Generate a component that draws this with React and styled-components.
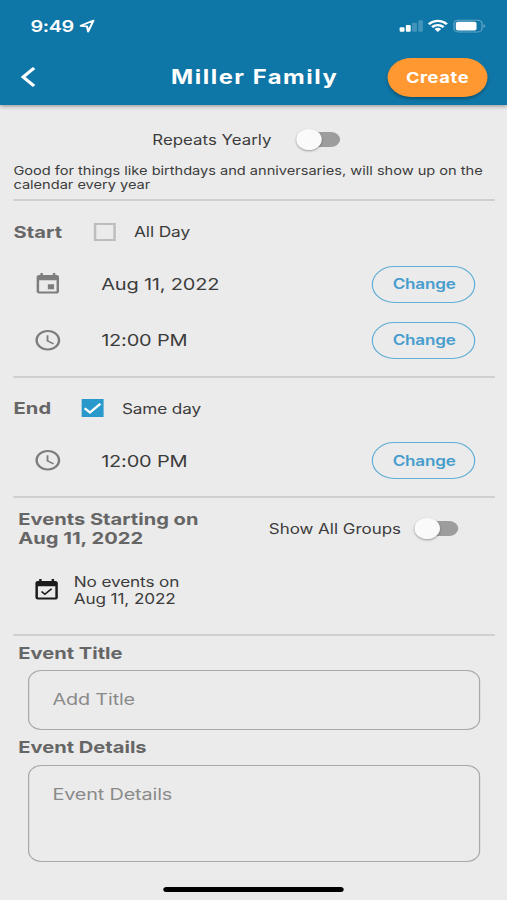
import { useState } from "react";
import styled, { createGlobalStyle } from "styled-components";
import { MdEvent, MdSchedule, MdEventAvailable } from "react-icons/md";

const HEADER_BLUE = "#0f77a7";
const LINK_BLUE = "#469dcd";
const ORANGE = "#ff9831";
const BACKGROUND = "#ebebeb";
const TEXT = "#3c3c3c";
const TITLE_GREY = "#666666";
const ICON_GREY = "#7d7d7d";

export default function App() {
    const [form, setForm] = useState({
        repeats: false,
        allDay: false,
        sameDay: true,
        allGroups: false,
    });

    const toggle = (field) => {
        setForm({ ...form, [field]: !form[field] });
    };

    return (
        <>
            <GlobalStyle />
            <Screen>
                <Header />
                <Content>
                    <RepeatRow>
                        <Label $size={13.8} $spacing={0.02}>Repeats Yearly</Label>
                        <Switch on={form.repeats} onClick={() => toggle("repeats")} />
                    </RepeatRow>
                    <Hint>
                        Good for things like birthdays and anniversaries, will show up on the calendar every year
                    </Hint>
                    <Divider />

                    <OptionRow $height={55} $top={6}>
                        <SectionTitle $width={66}>Start</SectionTitle>
                        <CheckBox checked={form.allDay} onClick={() => toggle("allDay")} />
                        <Label $size={14.2} $spacing={-0.1}>All Day</Label>
                    </OptionRow>
                    <ValueRow icon={<MdEvent />} value="Aug 11, 2022" />
                    <ValueRow icon={<MdSchedule />} value="12:00 PM" />
                    <Divider $top={8} />

                    <OptionRow $height={60}>
                        <SectionTitle $width={56}>End</SectionTitle>
                        <CheckBox checked={form.sameDay} onClick={() => toggle("sameDay")} />
                        <Label $size={14.1} $spacing={-0.1}>Same day</Label>
                    </OptionRow>
                    <ValueRow icon={<MdSchedule />} value="12:00 PM" height={45} />
                    <Divider $top={13} />

                    <EventsHeader>
                        <EventsTitle>Events Starting on<br />Aug 11, 2022</EventsTitle>
                        <GroupsToggle>
                            <Label $size={13.9} $spacing={0}>Show All Groups</Label>
                            <Switch on={form.allGroups} onClick={() => toggle("allGroups")} />
                        </GroupsToggle>
                    </EventsHeader>
                    <NoEvents>
                        <MdEventAvailable />
                        <p>No events on<br />Aug 11, 2022</p>
                    </NoEvents>
                    <Divider />

                    <FieldTitle>Event Title</FieldTitle>
                    <TitleInput placeholder="Add Title" />
                    <FieldTitle>Event Details</FieldTitle>
                    <DetailsInput placeholder="Event Details" />
                </Content>
                <HomeBar />
            </Screen>
        </>
    );
}

const Header = () => {
    return (
        <HeaderContainer>
            <StatusBar>
                <Clock>
                    9:49
                    <svg width="13" height="14" viewBox="0 0 13 14" fill="none" stroke="#ffffff" strokeWidth="1.7" strokeLinejoin="round">
                        <path d="M11.7 1.5 1.2 6.8 6.4 7.4 7.3 12.6Z" />
                    </svg>
                </Clock>
                <StatusIcons />
            </StatusBar>
            <NavBar>
                <BackButton>
                    <svg width="13" height="22" viewBox="0 0 13 22" fill="none" stroke="#ffffff" strokeWidth="2.9">
                        <path d="M11 2 2 11 11 20" />
                    </svg>
                </BackButton>
                <PageTitle>Miller Family</PageTitle>
                <CreateButton>Create</CreateButton>
            </NavBar>
        </HeaderContainer>
    );
};

const StatusIcons = () => {
    return (
        <svg width="72" height="14" viewBox="0 0 72 14" fill="#ffffff">
            <rect x="0.9" y="8.2" width="4" height="4.6" rx="1" />
            <rect x="6" y="6" width="4" height="6.8" rx="1" />
            <rect x="11.1" y="3.8" width="4" height="9" rx="1" opacity="0.22" />
            <rect x="16.2" y="1.2" width="3.8" height="11.6" rx="1" opacity="0.22" />
            <g fill="none" stroke="#ffffff" strokeWidth="2.2">
                <path d="M24.8 5.2C29.2 0.8 35.3 0.8 39.7 5.2" />
                <path d="M27.5 8.1C30.3 5.4 34.2 5.4 37 8.1" />
            </g>
            <path d="M29.5 9.9C31.3 8.3 33.2 8.3 35 9.9L32.25 12.9Z" />
            <rect x="45.5" y="1.2" width="23" height="11.8" rx="3.4" fill="none" stroke="#ffffff" strokeOpacity="0.35" />
            <rect x="47" y="2.7" width="17" height="8.8" rx="1.8" />
            <path d="M69.8 5.2C71.3 5.8 71.3 8.2 69.8 8.8Z" opacity="0.5" />
        </svg>
    );
};

const Switch = ({ on, onClick }) => {
    return (
        <Track $on={on} onClick={onClick}>
            <Thumb $on={on} />
        </Track>
    );
};

const CheckBox = ({ checked, onClick }) => {
    return (
        <Box $checked={checked} onClick={onClick}>
            {checked && (
                <svg width="18" height="18" viewBox="0 0 18 18" fill="none" stroke="#ffffff" strokeWidth="2.1">
                    <path d="M2.5 9.3 6.8 13.5 15.4 4.7" />
                </svg>
            )}
        </Box>
    );
};

const ValueRow = ({ icon, value, height = 56 }) => {
    return (
        <ValueContainer $height={height}>
            <IconSlot>{icon}</IconSlot>
            <Value>{value}</Value>
            <ChangeButton>Change</ChangeButton>
        </ValueContainer>
    );
};

const GlobalStyle = createGlobalStyle`
    * {
        box-sizing: border-box;
    }

    body {
        margin: 0;
        overflow: hidden;
        background-color: ${BACKGROUND};
    }

    body, button, input, textarea {
        font-family: Inter, "Liberation Sans", sans-serif;
    }

    svg {
        display: block;
        flex-shrink: 0;
    }
`;

const Screen = styled.div`
    display: flex;
    flex-direction: column;
    width: 416px;
    height: 900px;
    background-color: ${BACKGROUND};
    color: ${TEXT};
    transform: scaleX(1.21875);
    transform-origin: 0 0;
`;

const HeaderContainer = styled.header`
    height: 105px;
    flex-shrink: 0;
    background-color: ${HEADER_BLUE};
    color: #ffffff;
    box-shadow: 0 1px 4px rgba(0, 0, 0, 0.4);
`;

const StatusBar = styled.div`
    display: flex;
    align-items: center;
    justify-content: space-between;
    height: 52px;
    padding: 0 17px 0 25px;
`;

const Clock = styled.div`
    display: flex;
    align-items: center;
    gap: 5px;
    font-size: 16.3px;
    font-weight: 600;
    letter-spacing: -0.35px;
`;

const NavBar = styled.div`
    display: grid;
    grid-template-columns: 82px 1fr 82px;
    align-items: center;
    height: 50px;
    padding: 0 16px;
`;

const BackButton = styled.button`
    padding: 0 0 0 1px;
    border: none;
    background: none;
`;

const PageTitle = styled.h1`
    margin: 0;
    padding: 0 0 0 2px;
    font-size: 19.5px;
    font-weight: 700;
    letter-spacing: 1.25px;
    text-align: center;
    white-space: nowrap;
`;

const CreateButton = styled.button`
    height: 39px;
    padding: 1px 0 0;
    border: none;
    border-radius: 20px;
    background-color: ${ORANGE};
    color: #ffffff;
    font-size: 15px;
    font-weight: 700;
    letter-spacing: 0.5px;
    box-shadow: 0 2px 3px rgba(0, 0, 0, 0.3);
`;

const Content = styled.main`
    padding: 0 10px 0 11px;
`;

const Label = styled.span`
    font-size: ${(props) => props.$size}px;
    letter-spacing: ${(props) => props.$spacing}px;
    white-space: nowrap;
`;

const RepeatRow = styled.div`
    display: flex;
    align-items: center;
    gap: 20px;
    height: 59px;
    padding: 10px 0 0 114px;
`;

const Hint = styled.p`
    height: 35px;
    margin: 0;
    font-size: 12px;
    line-height: 14px;
    letter-spacing: -0.02px;
`;

const Divider = styled.hr`
    height: 2px;
    margin: ${(props) => props.$top || 0}px 0 0;
    border: none;
    background-color: #cfcfcf;
`;

const Track = styled.button`
    display: flex;
    align-items: center;
    width: 36px;
    height: 15px;
    padding: 0;
    border: none;
    border-radius: 8px;
    background-color: ${(props) => (props.$on ? LINK_BLUE : "#9d9d9d")};
`;

const Thumb = styled.span`
    width: 21px;
    height: 21px;
    flex-shrink: 0;
    margin-left: ${(props) => (props.$on ? 15 : 0)}px;
    border-radius: 50%;
    background-color: #fafafa;
    box-shadow: 0 1px 2px rgba(0, 0, 0, 0.35);
`;

const OptionRow = styled.div`
    display: flex;
    align-items: center;
    height: ${(props) => props.$height}px;
    padding-top: ${(props) => props.$top || 0}px;
`;

const SectionTitle = styled.h2`
    width: ${(props) => props.$width}px;
    margin: 0;
    color: ${TITLE_GREY};
    font-size: 16.5px;
    font-weight: 700;
    letter-spacing: 0.1px;
`;

const Box = styled.button`
    width: 18px;
    height: 18px;
    margin-right: 15px;
    padding: 0;
    border: ${(props) => (props.$checked ? "none" : "2px solid #bdbdbd")};
    background-color: ${(props) => (props.$checked ? "#2899ca" : "transparent")};
`;

const ValueContainer = styled.div`
    display: flex;
    align-items: center;
    height: ${(props) => props.$height}px;
    padding: 0 16px 0 16px;
`;

const IconSlot = styled.span`
    width: 56px;
    color: ${ICON_GREY};
    font-size: 24.5px;
`;

const Value = styled.span`
    flex: 1;
    font-size: 16.4px;
    letter-spacing: -0.15px;
`;

const ChangeButton = styled.button`
    width: 85px;
    height: 37px;
    padding: 0 0 1px 1px;
    border: 1.5px solid #62aed6;
    border-radius: 19px;
    background: none;
    color: ${LINK_BLUE};
    font-size: 14px;
    font-weight: 600;
    letter-spacing: -0.15px;
`;

const EventsHeader = styled.div`
    display: flex;
    justify-content: space-between;
    height: 62px;
    padding: 12px 30px 0 4px;
`;

const EventsTitle = styled.h2`
    margin: 0;
    color: ${TITLE_GREY};
    font-size: 16.5px;
    font-weight: 700;
    line-height: 19px;
    letter-spacing: 0;
    white-space: nowrap;
`;

const GroupsToggle = styled.div`
    display: flex;
    align-items: center;
    gap: 11px;
    height: 37px;
`;

const NoEvents = styled.div`
    display: flex;
    align-items: center;
    gap: 10px;
    height: 74px;
    padding: 0 0 14px 15px;

    svg {
        color: #1c1c1c;
        font-size: 24.5px;
    }

    p {
        margin: 0;
        font-size: 14.1px;
        line-height: 17px;
        letter-spacing: -0.1px;
    }
`;

const FieldTitle = styled.h2`
    height: 34px;
    margin: 0;
    padding-left: 4px;
    color: ${TITLE_GREY};
    font-size: 16.5px;
    font-weight: 700;
    line-height: 34px;
    letter-spacing: 0;
`;

const TitleInput = styled.input`
    display: block;
    width: 371px;
    height: 60px;
    margin-left: 12px;
    padding: 0 19px 3px;
    border: 1px solid #a8a8a8;
    border-radius: 11px;
    background: none;
    font-size: 16.3px;
    letter-spacing: -0.13px;

    &::placeholder {
        color: #8a8a8a;
    }
`;

const DetailsInput = styled(TitleInput).attrs({ as: "textarea" })`
    height: 97px;
    margin-top: 1px;
    padding-top: 18px;
    resize: none;
`;

const HomeBar = styled.div`
    width: 148px;
    height: 5px;
    margin: auto auto 8px;
    border-radius: 3px;
    background-color: #000000;
`;
